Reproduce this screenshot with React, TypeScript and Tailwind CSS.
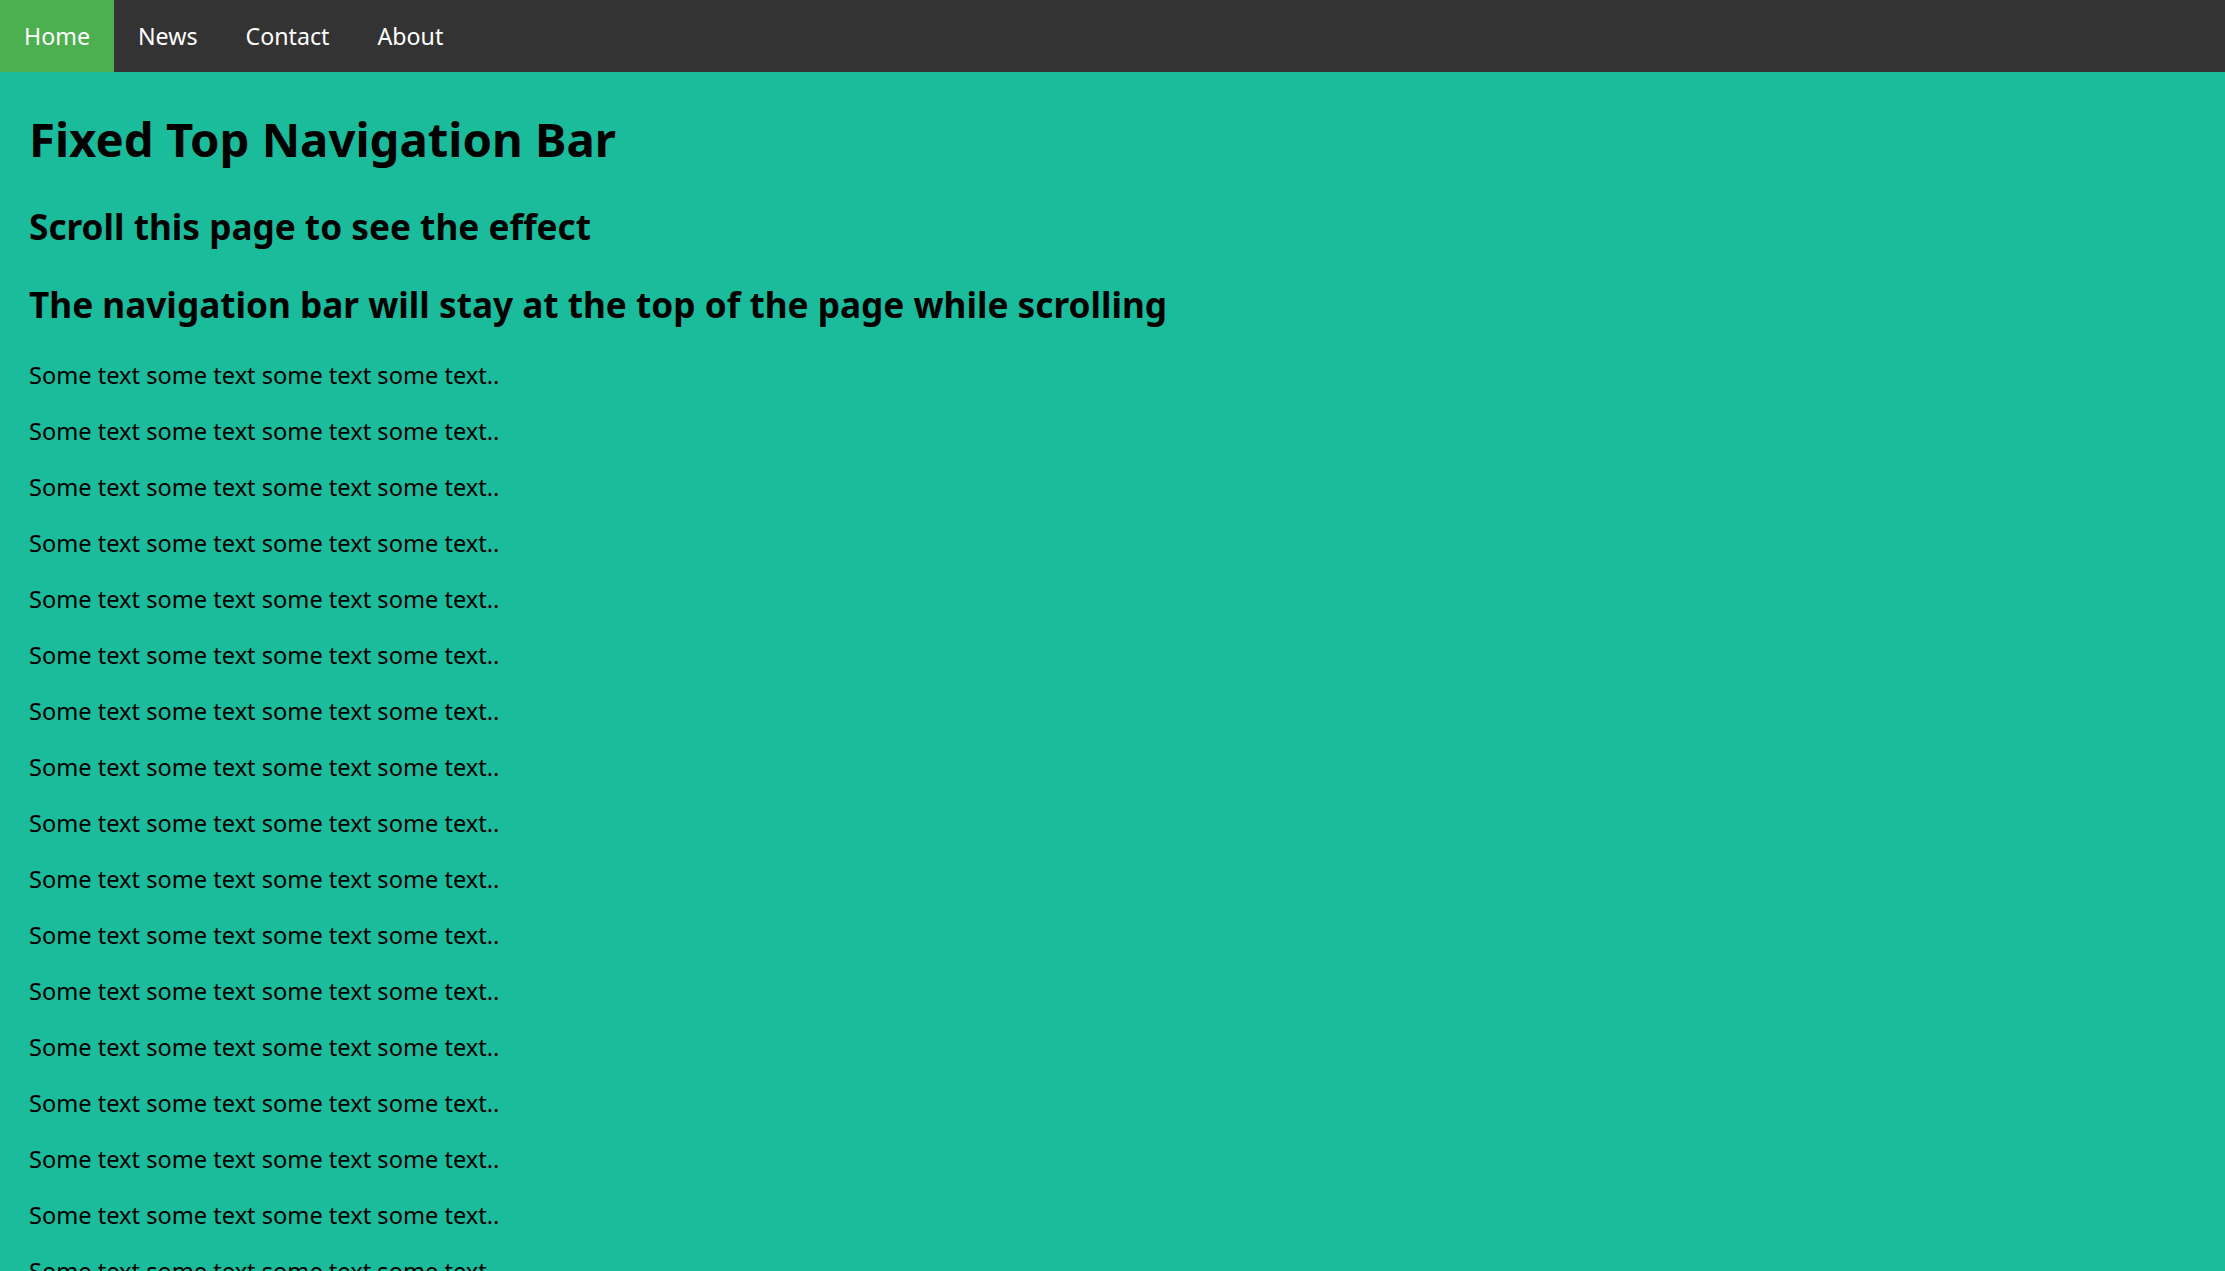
import React from "react";

const links = ["Home", "News", "Contact", "About"];

export default function App() {
  const rows = Array.from({ length: 20 }, (_, i) => i);

  return (
    <div className="min-h-screen bg-[#1abc9c] text-black font-['Noto_Sans',sans-serif]">
      <nav className="sticky top-0 flex h-[72px] w-full bg-[#333333]">
        {links.map((label, i) => (
          <a
            key={label}
            href="#"
            className={`flex items-center px-6 text-[23.2px] text-white ${
              i === 0 ? "bg-[#4caf50]" : "hover:bg-[#ddd] hover:text-black"
            }`}
          >
            {label}
          </a>
        ))}
      </nav>

      <main className="flex flex-col pl-[29px] pr-6 pb-10">
        <h1 className="mt-[34.5px] text-[47.3px] font-bold leading-[64px]">
          Fixed Top Navigation Bar
        </h1>
        <h2 className="mt-[31.5px] text-[35.2px] font-bold leading-[48px]">
          Scroll this page to see the effect
        </h2>
        <h2 className="mt-[30px] text-[35.2px] font-bold leading-[48px]">
          The navigation bar will stay at the top of the page while scrolling
        </h2>
        <div className="mt-[31px] flex flex-col gap-6">
          {rows.map((r) => (
            <p key={r} className="text-[23.6px] leading-[32px]">
              Some text some text some text some text..
            </p>
          ))}
        </div>
      </main>
    </div>
  );
}
